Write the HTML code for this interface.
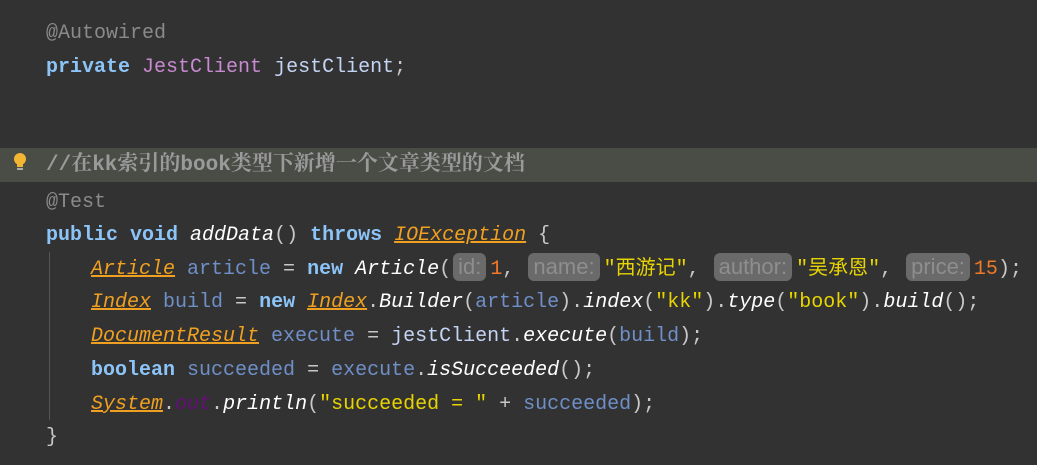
<!DOCTYPE html>
<html><head><meta charset="utf-8"><style>
body{margin:0;width:1037px;height:465px;background:#323232;overflow:hidden;position:relative;font-family:"Liberation Mono","Noto Sans CJK SC",monospace;font-size:20px;color:#c8c8c8}
.l{position:absolute;left:46px;white-space:pre;height:34px;line-height:34px}
.hl{position:absolute;left:0;top:148px;width:1037px;height:34px;background:#4a4c46}
.an{color:#8a8a8a}
.kw{color:#8cc4f8;font-weight:bold}
.cl{color:#f0a020;font-style:italic;text-decoration:underline}
.v{color:#6f8fc8}
.m{color:#fff;font-style:italic}
.s{color:#e8d400}
.n{color:#f07a28}
.cm{color:#9a9a9a;font-weight:bold;font-size:21px;font-family:"Liberation Mono","Noto Serif CJK SC",monospace}
.h{display:inline-block;background:#6a6a6a;color:#8e8e8e;border-radius:6px;font-family:"Liberation Sans",sans-serif;font-size:22px;line-height:28px;padding:0 5px;margin:0 4px 0 2px;vertical-align:0px}
.guide{position:absolute;left:49px;top:252px;width:1px;height:168px;background:#555}
</style></head><body>
<div class="hl"></div>
<div class="guide"></div>
<svg style="position:absolute;left:11px;top:152px" width="18" height="22" viewBox="0 0 18 22"><circle cx="9" cy="7" r="6" fill="#f2b632"/><rect x="6" y="11" width="6" height="4" fill="#f2b632"/><rect x="6" y="16" width="6" height="2" fill="#aaa"/></svg>
<div class="l an" style="top:17px">@Autowired</div>
<div class="l" style="top:51px"><span class="kw">private</span> <span style="color:#c88ad0">JestClient</span> <span style="color:#c4d4f4">jestClient</span>;</div>
<div class="l cm" style="top:149px">//在kk索引的book类型下新增一个文章类型的文档</div>
<div class="l an" style="top:186px">@Test</div>
<div class="l" style="top:219px"><span class="kw">public void</span> <span class="m">addData</span>() <span class="kw">throws</span> <span class="cl">IOException</span> {</div>
<div class="l" style="top:253px;left:91px"><span class="cl">Article</span> <span class="v">article</span> = <span class="kw">new</span> <span class="m">Article</span>(<span class="h">id:</span><span class="n">1</span>, <span class="h">name:</span><span class="s">"西游记"</span>, <span class="h">author:</span><span class="s">"吴承恩"</span>, <span class="h">price:</span><span class="n">15</span>);</div>
<div class="l" style="top:286px;left:91px"><span class="cl">Index</span> <span class="v">build</span> = <span class="kw">new</span> <span class="cl">Index</span>.<span class="m">Builder</span>(<span class="v">article</span>).<span class="m">index</span>(<span class="s">"kk"</span>).<span class="m">type</span>(<span class="s">"book"</span>).<span class="m">build</span>();</div>
<div class="l" style="top:320px;left:91px"><span class="cl">DocumentResult</span> <span class="v">execute</span> = <span style="color:#c4d4f4">jestClient</span>.<span class="m">execute</span>(<span class="v">build</span>);</div>
<div class="l" style="top:354px;left:91px"><span class="kw">boolean</span> <span class="v">succeeded</span> = <span class="v">execute</span>.<span class="m">isSucceeded</span>();</div>
<div class="l" style="top:388px;left:91px"><span class="cl">System</span>.<span style="color:#660e7a;font-style:italic">out</span>.<span class="m">println</span>(<span class="s">"succeeded = "</span> + <span class="v">succeeded</span>);</div>
<div class="l" style="top:421px">}</div>
</body></html>
